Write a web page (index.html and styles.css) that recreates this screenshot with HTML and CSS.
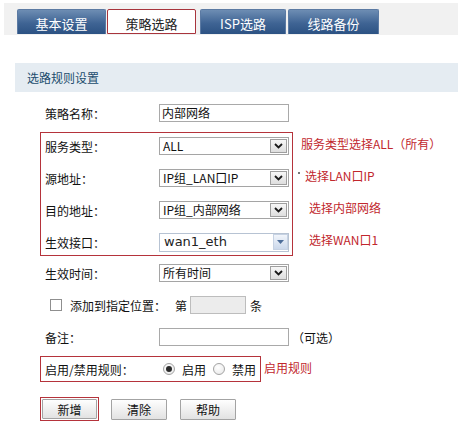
FILE: index.html
```html
<!DOCTYPE html>
<html lang="zh-CN">
<head>
<meta charset="utf-8">
<title>策略选路</title>
<link rel="stylesheet" href="styles.css">
</head>
<body>
<div class="tabbar">
  <div class="tab tab-1">基本设置</div>
  <div class="tab tab-2 active">策略选路</div>
  <div class="tab tab-3">ISP选路</div>
  <div class="tab tab-4">线路备份</div>
</div>

<div class="section-title">选路规则设置</div>

<div class="form">
  <div class="row">
    <span class="label">策略名称：</span>
    <span class="input">内部网络</span>
  </div>

  <div class="group">
    <div class="redbox box-main">
      <div class="row">
        <span class="label">服务类型：</span>
        <span class="select"><span class="val">ALL</span><span class="arrow"><svg width="9" height="6" viewBox="0 0 9 6"><path d="M1 1 L4.5 4.5 L8 1" fill="none" stroke="#1a1a1a" stroke-width="1.8"/></svg></span></span>
      </div>
      <div class="row">
        <span class="label">源地址：</span>
        <span class="select"><span class="val">IP组_LAN口IP</span><span class="arrow"><svg width="9" height="6" viewBox="0 0 9 6"><path d="M1 1 L4.5 4.5 L8 1" fill="none" stroke="#1a1a1a" stroke-width="1.8"/></svg></span></span>
      </div>
      <div class="row">
        <span class="label">目的地址：</span>
        <span class="select"><span class="val">IP组_内部网络</span><span class="arrow"><svg width="9" height="6" viewBox="0 0 9 6"><path d="M1 1 L4.5 4.5 L8 1" fill="none" stroke="#1a1a1a" stroke-width="1.8"/></svg></span></span>
      </div>
      <div class="row">
        <span class="label">生效接口：</span>
        <span class="select select-wan"><span class="val">wan1_eth</span><span class="arrow"><svg width="7" height="4" viewBox="0 0 7 4"><path d="M0 0 H7 L3.5 4 Z" fill="#4d6d99"/></svg></span></span>
      </div>
    </div>
    <div class="notes">
      <span class="note note-1">服务类型选择ALL（所有）</span>
      <span class="note note-2"><span class="dot"></span>选择LAN口IP</span>
      <span class="note note-3">选择内部网络</span>
      <span class="note note-4">选择WAN口1</span>
    </div>
  </div>

  <div class="row row-tight">
    <span class="label">生效时间：</span>
    <span class="select"><span class="val">所有时间</span><span class="arrow"><svg width="9" height="6" viewBox="0 0 9 6"><path d="M1 1 L4.5 4.5 L8 1" fill="none" stroke="#1a1a1a" stroke-width="1.8"/></svg></span></span>
  </div>

  <div class="row row-check">
    <span class="checkbox"></span>
    <span class="check-label">添加到指定位置：</span>
    <span class="pos-prefix">第</span>
    <span class="pos-input"></span>
    <span class="pos-suffix">条</span>
  </div>

  <div class="row">
    <span class="label">备注：</span>
    <span class="input"></span>
    <span class="optional">（可选）</span>
  </div>

  <div class="group">
    <div class="redbox box-enable">
      <div class="row">
        <span class="label">启用/禁用规则：</span>
        <span class="radio on"></span>
        <span class="radio-text">启用</span>
        <span class="radio"></span>
        <span class="radio-text">禁用</span>
      </div>
    </div>
    <div class="notes notes-enable">
      <span class="note note-enable">启用规则</span>
    </div>
  </div>

  <div class="actions">
    <span class="btn-mark"><button class="btn btn-inner">新增</button></span>
    <button class="btn btn-clear">清除</button>
    <button class="btn btn-help">帮助</button>
  </div>
</div>
</body>
</html>
```

FILE: styles.css
```css
* { box-sizing: border-box; }

body {
  margin: 0;
  font-family: "Noto Sans CJK SC", "Liberation Sans", sans-serif;
  font-size: 12px;
  color: #111;
  background: #fff;
}

/* Tabs */
.tabbar {
  display: flex;
  align-items: flex-end;
  height: 32px;
  margin: 3px 0 0 4px;
  padding: 0 0 1px 13px;
  background: #f1f1f1;
}
.tab {
  height: 25px;
  display: flex;
  align-items: center;
  justify-content: center;
  padding-top: 3px;
  font-size: 13px;
  color: #fff;
  background: linear-gradient(#6d8db3, #3f6494 55%, #2c5283);
  border: 1px solid #5b7aa3;
  border-bottom: none;
  border-radius: 2px 2px 0 0;
}
.tab-1 { width: 89px; }
.tab-2 { width: 89px; margin-left: 1px; }
.tab-3 { width: 86px; margin-left: 4px; }
.tab-4 { width: 91px; margin-left: 2px; }
.tab.active {
  background: #fff;
  color: #222;
  border: 1px solid #a8343c;
}

/* Section title */
.section-title {
  margin: 28px 0 0 15px;
  height: 29px;
  line-height: 29px;
  padding-left: 12px;
  background: #e5ecf2;
  color: #214d6e;
  font-size: 12px;
}

/* Form */
.form {
  display: flex;
  flex-direction: column;
  align-items: flex-start;
  gap: 6px;
  margin: 8px 0 0 40px;
}
.row {
  display: flex;
  align-items: center;
  height: 26px;
  padding-left: 5px;
  white-space: nowrap;
}
.redbox .row { padding-left: 4px; }
.row-tight { margin-top: -2px; }
.label { width: 114px; flex: none; }

.input {
  width: 130px;
  height: 18px;
  border: 1px solid #a9a9a9;
  padding: 0 2px;
  line-height: 16px;
  background: #fff;
}

.select {
  width: 130px;
  height: 18px;
  border: 1px solid #a5a5a5;
  display: flex;
  align-items: center;
  justify-content: space-between;
  padding-left: 3px;
  background: #fff;
}
.select .val { line-height: 16px; }
.select .arrow {
  width: 17px;
  height: 14px;
  margin-right: 1px;
  border: 1px solid #9f9f9f;
  background: linear-gradient(#f7f7f7, #dedede);
  display: flex;
  align-items: center;
  justify-content: center;
}
.select-wan {
  height: 19px;
  border-color: #b7c3d3;
  font-family: "DejaVu Sans", "Noto Sans CJK SC", sans-serif;
  font-size: 13px;
  color: #222;
  padding-left: 4px;
}
.select-wan .arrow {
  width: 15px;
  height: 16px;
  margin-right: 0;
  border: 1px solid #c6d2e3;
  background: linear-gradient(#f1f5fb, #cbd8eb);
}

/* Red annotation boxes */
.group {
  display: flex;
  align-items: flex-start;
}
.redbox {
  border: 1px solid #b5333b;
  display: flex;
  flex-direction: column;
  gap: 6px;
}
.box-main { width: 253px; }
.notes {
  display: flex;
  flex-direction: column;
  gap: 6px;
  margin-top: -2px;
  color: #c1272d;
}
.note {
  height: 26px;
  display: flex;
  align-items: center;
  white-space: nowrap;
}
.note-1 { margin-left: 8px; }
.note-2 { margin-left: 5px; }
.note-3 { margin-left: 16px; }
.note-4 { margin-left: 16px; }
.dot {
  width: 2px;
  height: 2px;
  background: #777;
  margin: -4px 5px 0 0;
}

/* Checkbox row */
.row-check { padding-left: 10px; }
.checkbox {
  width: 12px;
  height: 12px;
  border: 1px solid #8f8f8f;
  background: #fff;
}
.check-label { margin-left: 8px; }
.pos-prefix { margin-left: 9px; }
.pos-input {
  width: 56px;
  height: 18px;
  margin-left: 3px;
  border: 1px solid #bdbdbd;
  background: #ececec;
}
.pos-suffix { margin-left: 4px; }
.optional { margin-left: 3px; }

/* Enable row */
.box-enable .row {
  height: 24px;
  padding-right: 4px;
}
.radio {
  position: relative;
  width: 12px;
  height: 12px;
  margin-left: 4px;
  border: 1px solid #a3a3a3;
  border-radius: 50%;
  background: radial-gradient(circle at 40% 35%, #fff, #e6e6e6);
}
.radio + .radio-text + .radio { margin-left: 7px; }
.radio.on::after {
  content: "";
  position: absolute;
  left: 2px;
  top: 2px;
  width: 6px;
  height: 6px;
  border-radius: 50%;
  background: #2a2a2a;
}
.radio-text { margin-left: 7px; }
.notes-enable { margin-top: -1px; }
.note-enable {
  height: 24px;
  margin-left: 3px;
}

/* Buttons */
.actions {
  display: flex;
  align-items: center;
  margin-top: 9px;
}
.btn {
  width: 56px;
  height: 21px;
  padding: 0;
  border: 1px solid #a3a3a3;
  border-radius: 1px;
  background: linear-gradient(#fefefe, #e2e2e2);
  font-family: "Noto Sans CJK SC", sans-serif;
  font-size: 12px;
  color: #111;
  display: flex;
  align-items: center;
  justify-content: center;
}
.btn-mark {
  display: flex;
  border: 1px solid #b5333b;
  padding: 1px;
}
.btn-inner { width: 55px; height: 20px; }
.btn-clear { margin-left: 12px; }
.btn-help { margin-left: 13px; }
```
